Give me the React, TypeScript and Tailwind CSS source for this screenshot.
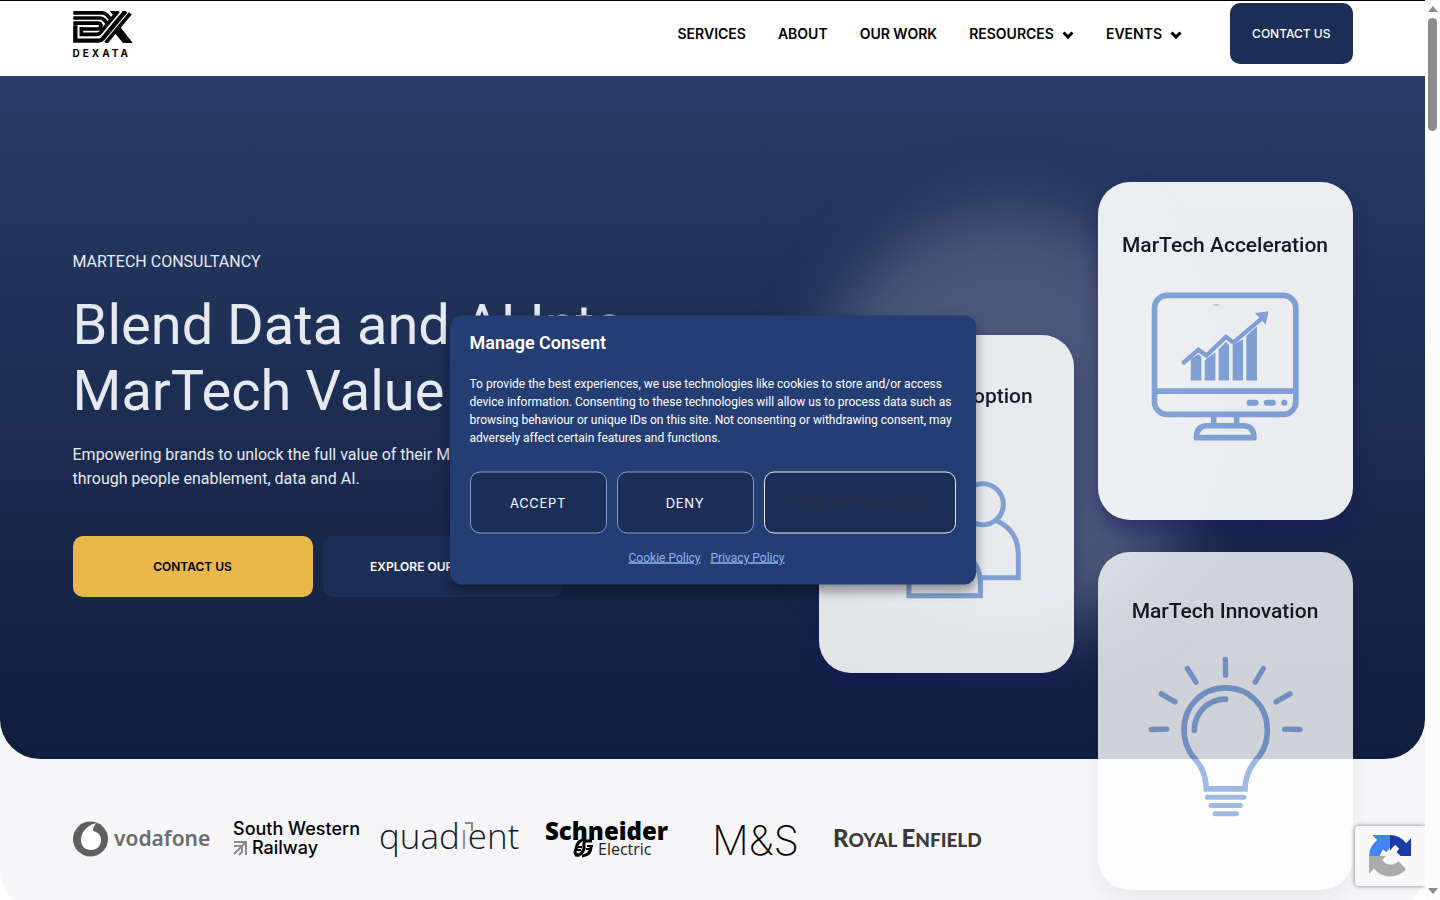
import type { ReactNode } from "react"
import { clsx } from "clsx"

function DexataLogo() {
  return (
    <a href="#" className="flex w-[60px] flex-col items-start gap-[5px] pt-[2px] text-black">
      <svg viewBox="9 9 178 96" className="h-8 w-[60px]" fill="none" stroke="currentColor" aria-hidden="true">
        <path d="M150 57L187 105H158L134 76Z" fill="currentColor" stroke="none" />
        <g strokeWidth="11">
          <path d="M9 14.500H96Q104 14.500 110 21L132 46" />
          <path d="M9 30H90Q97 30 102 36L120 57" />
          <path d="M9 45.500H82Q92 45.500 92 54T82 63H38" />
        </g>
        <path d="M119 9H133L146 25L137 34Z" fill="currentColor" stroke="none" />
        <path d="M90 96L164 10" stroke="#fff" strokeWidth="36" />
        <path d="M15 52V98H84Q92 98 98 91L166 9" strokeWidth="13" />
        <path d="M33 57V79H78Q86 79 91 73L144 9" strokeWidth="11" />
        <path d="M106 105L180 16" strokeWidth="11" />
      </svg>
      <span className="text-[10px] leading-[10px] font-bold tracking-[0.3em]">DEXATA</span>
    </a>
  )
}

function Chevron() {
  return (
    <svg viewBox="0 0 12 8" className="mt-[2px] h-2 w-3" fill="none" stroke="currentColor" strokeWidth="3" aria-hidden="true">
      <path d="M1.500 1.500L6 6L10.500 1.500" />
    </svg>
  )
}

const navItems = [
  { label: "SERVICES" },
  { label: "ABOUT" },
  { label: "OUR WORK" },
  { label: "RESOURCES", menu: true },
  { label: "EVENTS", menu: true },
]

function Header() {
  return (
    <header className="border-t border-black bg-white pt-[2px] pb-3">
      <div className="mx-auto flex max-w-7xl items-center justify-between">
        <DexataLogo />
        <div className="flex items-center gap-12">
          <nav className="flex items-center gap-8 text-[14px] font-semibold text-black">
            {navItems.map((item) => (
              <a key={item.label} href="#" className="flex items-center gap-2">
                {item.label}
                {item.menu && <Chevron />}
              </a>
            ))}
          </nav>
          <a
            href="#"
            className="rounded-[10px] bg-[#1c2e56] px-[22px] py-5 text-[12px] leading-[21px] font-medium text-white"
          >
            CONTACT US
          </a>
        </div>
      </div>
    </header>
  )
}

function MonitorIcon() {
  return (
    <svg viewBox="208 358 456 460" className="mt-7 h-[153px] w-[152px]" fill="none" stroke="#89aadf" strokeWidth="17" aria-hidden="true">
      <rect x="224" y="377" width="425" height="358" rx="38" />
      <path d="M224 665H649M402 735V770M471 735V770" />
      <path d="M350 805H523Q523 769 490 769H384Q350 769 350 805Z" strokeLinejoin="round" />
      <path d="M510 700H528M562 700H580M614 700H615" strokeWidth="18" strokeLinecap="round" />
      <path d="M312 579L356 541L380 558L439 502L461 519L545 448" strokeWidth="13" strokeLinecap="round" />
      <path d="M402 406H417" stroke="#c4c8d2" strokeWidth="5" />
      <g fill="#89aadf" stroke="none">
        <path d="M567 425L526 430L558 465Z" />
        <path d="M333 633V569L356 554L365 562V633Z" />
        <path d="M375 633V572L407 548V633Z" />
        <path d="M417 633V539L439 517L448 526V633Z" />
        <path d="M459 633V526L490 509V633Z" />
        <path d="M500 633V499L532 470V633Z" />
      </g>
    </svg>
  )
}

function PeopleIcon() {
  return (
    <svg viewBox="268 473 460 364" className="mt-[66px] h-[121px] w-[153px]" fill="none" stroke="#89aadf" strokeWidth="15" aria-hidden="true">
      <circle cx="607" cy="552" r="62" />
      <path d="M650 602Q714 632 714 703V773H600" />
      <circle cx="393" cy="552" r="62" />
      <path d="M350 602Q286 632 286 703V773H385" />
      <circle cx="492" cy="635" r="55" />
      <path d="M385 827V782Q390 695 492 695T600 782V827Z" />
    </svg>
  )
}

function BulbIcon() {
  return (
    <svg viewBox="198 342 474 500" className="mt-[27px] h-[167px] w-[158px]" fill="none" stroke="#89aadf" strokeWidth="17" strokeLinecap="round" aria-hidden="true">
      <path d="M379 746H495C497 695 520 668 540 645C556 622 562 598 562 570C562 497 507 443 437 443S312 497 312 570C312 598 320 622 336 645C358 671 376 692 379 746Z" />
      <path d="M343 570C343 519 384 477 437 477" />
      <path d="M436 358L437 405M322 385L348 426M550 385L526 426M244 461L285 485M630 461L588 485M214 568L260 567M614 567L660 568" strokeWidth="16" />
      <path d="M382 771H492M393 796H481M405 821H469" strokeWidth="15" />
    </svg>
  )
}

function Card({ title, className, children }: { title: string; className?: string; children: ReactNode }) {
  return (
    <article className={clsx("flex min-h-[338px] w-[255px] flex-col items-center rounded-[32px] bg-white", className)}>
      <h2 className="text-[21px] leading-8 font-medium text-[#14161d]">{title}</h2>
      {children}
    </article>
  )
}

function Hero() {
  return (
    <section className="relative rounded-b-[40px] bg-linear-to-b from-[#283c65] to-[#101e3e]">
      <div className="absolute top-[135px] left-[57%] h-[430px] w-[390px] rounded-[50%] bg-[#4b577a] blur-[32px]" />
      <div className="relative mx-auto flex max-w-7xl justify-between pt-[106px]">
        <div className="mt-[68px] text-[#e6e9f2]">
          <p className="text-base leading-6">MARTECH CONSULTANCY</p>
          <h1 className="mt-[18px] text-[56px] leading-[66px] whitespace-nowrap">
            Blend Data and AI Into
            <br />
            MarTech Value
          </h1>
          <p className="mt-[19px] text-base leading-6">
            Empowering brands to unlock the full value of their MarTech
            <br />
            through people enablement, data and AI.
          </p>
          <div className="mt-[45px] flex gap-[10px] font-[Inter] text-[12px] leading-[21px] font-semibold">
            <a href="#" className="w-60 rounded-[10px] bg-[#e8b84b] py-5 text-center text-black">
              CONTACT US
            </a>
            <a href="#" className="w-60 rounded-[10px] bg-[#1c2e56] py-5 text-center text-white">
              EXPLORE OUR SERVICES
            </a>
          </div>
        </div>
        <div className="-mb-[131px] flex items-start gap-6">
          <Card
            title="MarTech Adoption"
            className="mt-[153px] pt-[45px] opacity-[0.88] shadow-[0_12px_20px_-2px_rgba(25,20,95,0.6)]"
          >
            <PeopleIcon />
          </Card>
          <div className="flex flex-col gap-8">
            <Card
              title="MarTech Acceleration"
              className="pt-[47px] opacity-[0.91] shadow-[0_12px_20px_-2px_rgba(25,20,95,0.6)]"
            >
              <MonitorIcon />
            </Card>
            <Card
              title="MarTech Innovation"
              className="pt-[43px] opacity-80 shadow-[0_12px_20px_-2px_rgba(25,20,95,0.08)]"
            >
              <BulbIcon />
            </Card>
          </div>
        </div>
      </div>
    </section>
  )
}

function Clients() {
  return (
    <section className="mx-auto flex max-w-7xl gap-5 pt-[50px] pb-[39px]">
      <svg viewBox="0 0 140 62" className="h-[62px] w-[140px]" role="img" aria-label="vodafone">
        <circle cx="17.500" cy="30" r="17.500" fill="#5f5f5f" />
        <path d="M24 14C16 15 8 22 8 31C8 37 12 41 18 41C24 41 28 37 28 31C28 26 25 23 20 22C20 18 22 15 24 14Z" fill="#fff" />
        <text x="41" y="37" fontFamily="Noto Sans" fontWeight="600" fontSize="21" fill="#6b6b6b">vodafone</text>
      </svg>
      <svg viewBox="0 0 127 62" className="h-[62px] w-[127px]" role="img" aria-label="South Western Railway">
        <text x="0" y="26" fontFamily="Inter" fontWeight="500" fontSize="18">South Western</text>
        <text x="19" y="45" fontFamily="Inter" fontWeight="500" fontSize="18">Railway</text>
        <path d="M1 33H13V46M1 37H9M1 45L12 34M6 46L9 43V38" fill="none" stroke="#8a8a8a" strokeWidth="2" />
      </svg>
      <svg viewBox="0 0 142 62" className="h-[62px] w-[142px]" role="img" aria-label="quadient">
        <text x="-1" y="40" fontFamily="Open Sans" fontWeight="300" fontSize="35" fill="#1a1a1a">
          quad<tspan fill="#888">ı</tspan>ent
        </text>
        <path d="M85 14H92V22" fill="none" stroke="#888" strokeWidth="2" />
      </svg>
      <svg viewBox="0 0 128 62" className="h-[62px] w-[128px]" role="img" aria-label="Schneider Electric">
        <text x="3" y="31" fontFamily="Open Sans" fontWeight="800" fontSize="24">Schneider</text>
        <g fill="none" stroke="#000">
          <path d="M50 32H45Q41 32 42 37T37 46H33" strokeWidth="3" />
          <path d="M37 46Q31 46 34 40Q35 31 44 30M40 47Q49 46 49 38" strokeWidth="3" />
          <path d="M35 38H40M34 41H39M45 37H51M44 40H50" strokeWidth="2" />
        </g>
        <text x="56" y="46" fontFamily="Open Sans" fontSize="16" fill="#222">Electric</text>
      </svg>
      <svg viewBox="0 0 124 62" className="h-[62px] w-[124px]" role="img" aria-label="M&S">
        <text x="22" y="46" fontFamily="Inter" fontWeight="200" fontSize="41">M&amp;S</text>
      </svg>
      <svg viewBox="0 0 150 62" className="h-[62px] w-[150px]" role="img" aria-label="Royal Enfield">
        <text x="-1" y="38" fontFamily="Lato" fontWeight="900" fontSize="19" fill="#3a3a3a">
          <tspan fontSize="24">R</tspan>OYAL <tspan fontSize="24">E</tspan>NFIELD
        </text>
      </svg>
    </section>
  )
}

function ConsentDialog() {
  const button = "rounded-[10px] border bg-[#1c2e56] py-[21px] font-[Inter] text-[13px] leading-[18px] tracking-wider"
  return (
    <div
      role="dialog"
      aria-labelledby="consent-title"
      className="absolute top-1/2 left-1/2 w-[526px] -translate-x-1/2 -translate-y-1/2 rounded-xl bg-[#243e74] px-5 pt-[15px] pb-[18px] text-white shadow-[0_6px_12px_rgba(0,0,0,0.4)]"
    >
      <h2 id="consent-title" className="text-lg leading-6 font-semibold">
        Manage Consent
      </h2>
      <p className="mt-5 text-[12px] leading-[18px]">
        To provide the best experiences, we use technologies like cookies to store and/or access device information.
        Consenting to these technologies will allow us to process data such as browsing behaviour or unique IDs on this
        site. Not consenting or withdrawing consent, may adversely affect certain features and functions.
      </p>
      <div className="mt-[25px] flex gap-[10px]">
        <button className={clsx(button, "w-[137px] border-[#7f9cd6]")}>ACCEPT</button>
        <button className={clsx(button, "w-[137px] border-[#7f9cd6]")}>DENY</button>
        <button className={clsx(button, "flex-1 border-[#e6ebf7] text-[#222c42]")}>VIEW PREFERENCES</button>
      </div>
      <div className="mt-[15px] flex justify-center gap-[10px] pr-3 text-[12px] leading-[18px] text-[#8fb0f0] underline">
        <a href="#">Cookie Policy</a>
        <a href="#">Privacy Policy</a>
      </div>
    </div>
  )
}

function RecaptchaBadge() {
  return (
    <div className="absolute right-0 bottom-[14px] rounded-l-sm bg-[#f9f9f9] py-[9px] pr-3.5 pl-[14px] shadow-[0_0_5px_gray]">
      <svg viewBox="0 0 64 64" className="h-[42px] w-[42px]" aria-hidden="true">
        <path d="M64 32V5L56.500 12.500A32 32 0 0 0 32 0V24L36 19L40 15L46 21L42 26L48 32Z" fill="#1c3aa9" />
        <path d="M32 0H5L12.500 7.500A32 32 0 0 0 0 32H16L21 22L27 26L32 19Z" fill="#4285f4" />
        <path d="M0 32V59L7.500 51.500A32 32 0 0 0 56.500 52L45 40A16 16 0 0 1 25 43L20 38L26 32Z" fill="#ababab" />
      </svg>
    </div>
  )
}

function Scrollbar() {
  return (
    <div className="flex w-[15px] shrink-0 flex-col items-center bg-[#fcfcfc] py-[6px]" aria-hidden="true">
      <svg viewBox="0 0 10 6" className="h-[6px] w-[10px]" fill="#8b8b8b">
        <path d="M5 0L10 6H0Z" />
      </svg>
      <div className="mt-[6px] h-[113px] w-[9px] rounded-full bg-[#8b8b8b]" />
      <svg viewBox="0 0 10 6" className="mt-auto h-[6px] w-[10px]" fill="#8b8b8b">
        <path d="M5 6L0 0H10Z" />
      </svg>
    </div>
  )
}

export default function App() {
  return (
    <div className="flex h-screen bg-white font-[Roboto,sans-serif]">
      <div className="relative flex-1 overflow-hidden">
        <div className="font-[Inter,sans-serif]">
          <Header />
        </div>
        <main className="rounded-b-[40px] bg-[#f6f6f9]">
          <Hero />
          <Clients />
        </main>
        <ConsentDialog />
        <RecaptchaBadge />
      </div>
      <Scrollbar />
    </div>
  )
}
